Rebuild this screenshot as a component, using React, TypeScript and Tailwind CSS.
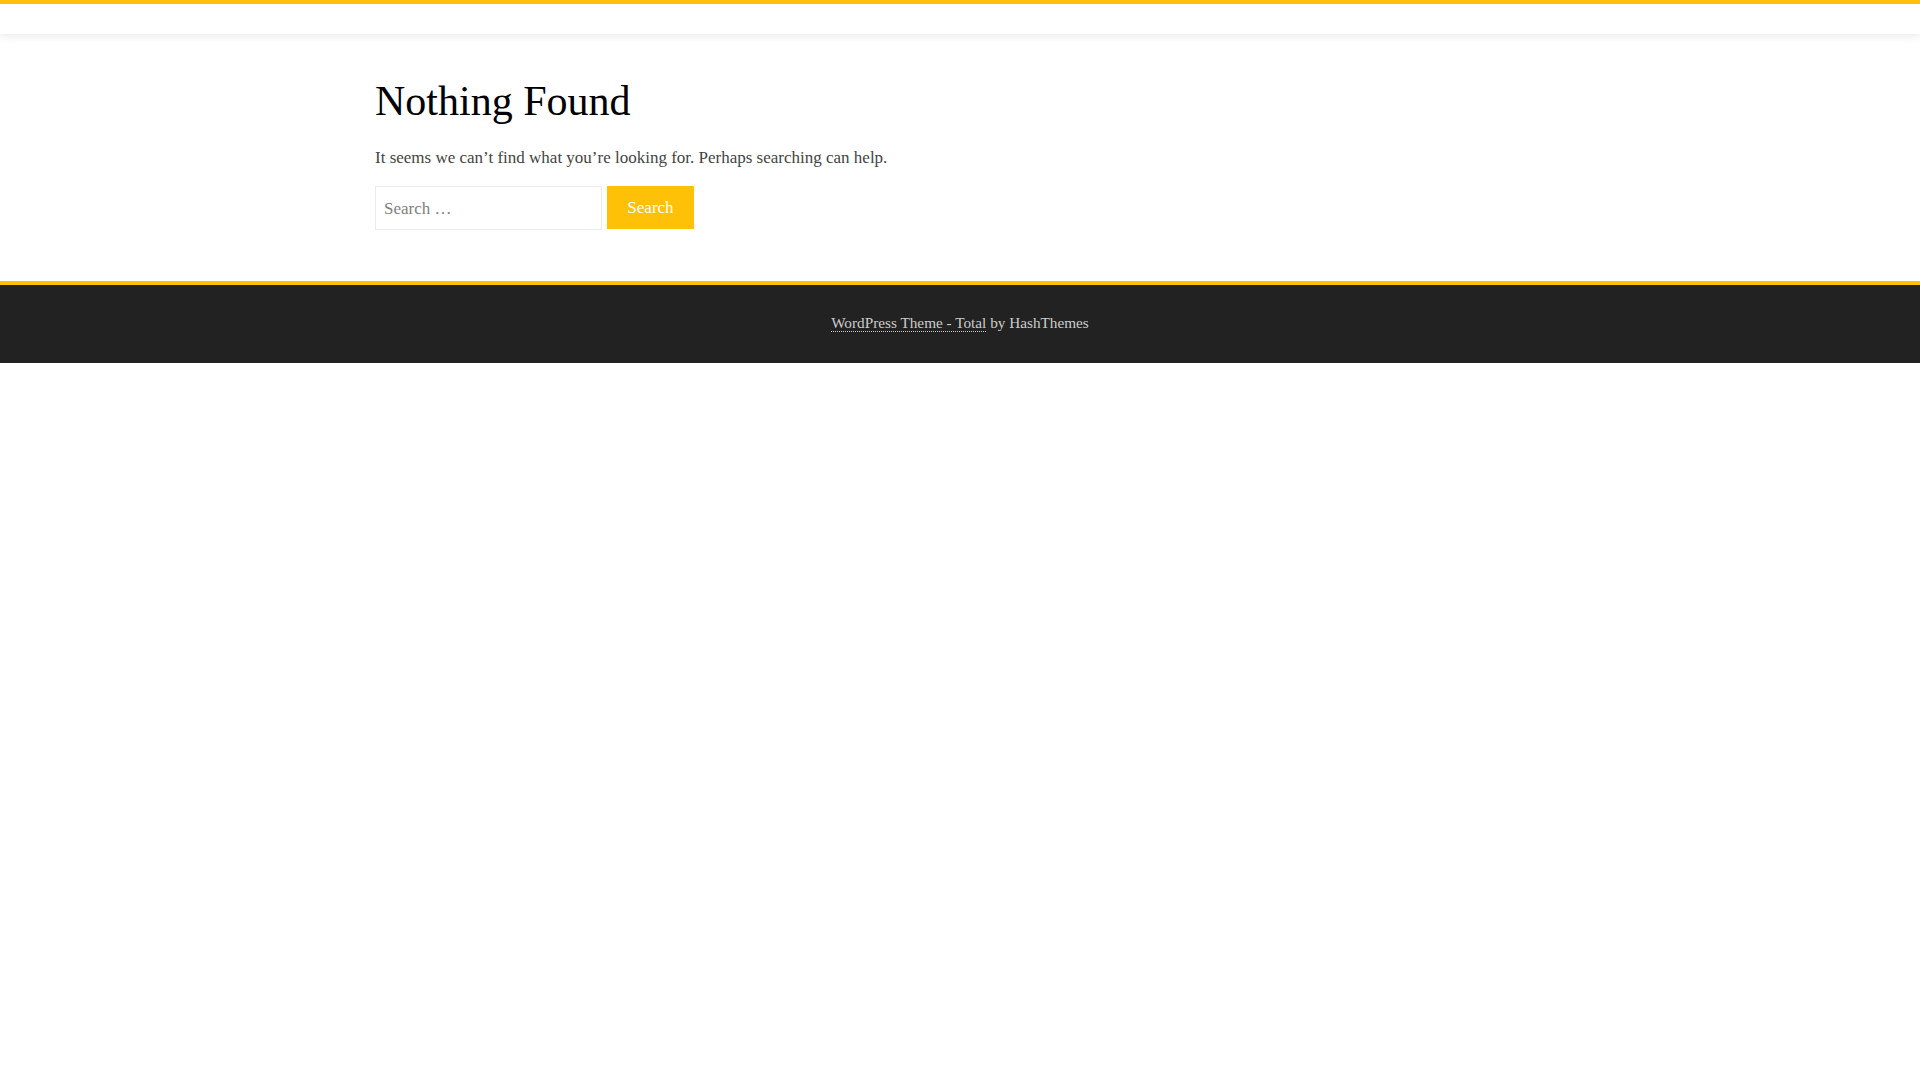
import React from 'react'

const serif = { fontFamily: '"Liberation Serif", "Times New Roman", serif' }

export default function App() {
  return (
    <div className="min-h-screen bg-white text-[#333]" style={serif}>
      {/* Header */}
      <header className="relative z-10 h-[34px] border-t-4 border-[#FFC107] bg-white shadow-[0_3px_8px_rgba(0,0,0,0.08)]" />

      {/* Content */}
      <main className="mx-auto w-[1170px] pt-[42px] pb-[51px]">
        <h1 className="text-[42px] leading-[1.2] font-normal text-black">Nothing Found</h1>
        <p className="mt-[19px] text-[17px] leading-[25px] text-[#444]">
          It seems we can’t find what you’re looking for. Perhaps searching can help.
        </p>
        <form className="mt-[16px] flex items-start gap-[5px]" onSubmit={e => e.preventDefault()}>
          <input
            type="search"
            placeholder="Search …"
            className="h-[44px] w-[227px] border border-[#ebebeb] bg-white px-[8px] pt-[2px] text-[17px] text-[#333] outline-none placeholder:text-[#808080]"
            style={serif}
          />
          <button
            type="submit"
            className="h-[43px] w-[87px] bg-[#FFC107] text-[17px] text-white"
            style={serif}
          >
            Search
          </button>
        </form>
      </main>

      {/* Footer */}
      <footer className="border-t-4 border-[#FFC107] bg-[#222222] pt-[27px] pb-[29px] text-center text-[15.25px] leading-[22px] text-[#cccccc]">
        <a href="#" className="border-b border-dotted border-[#cccccc] text-[#cccccc]">
          WordPress Theme - Total
        </a>{' '}
        by HashThemes
      </footer>
    </div>
  )
}
